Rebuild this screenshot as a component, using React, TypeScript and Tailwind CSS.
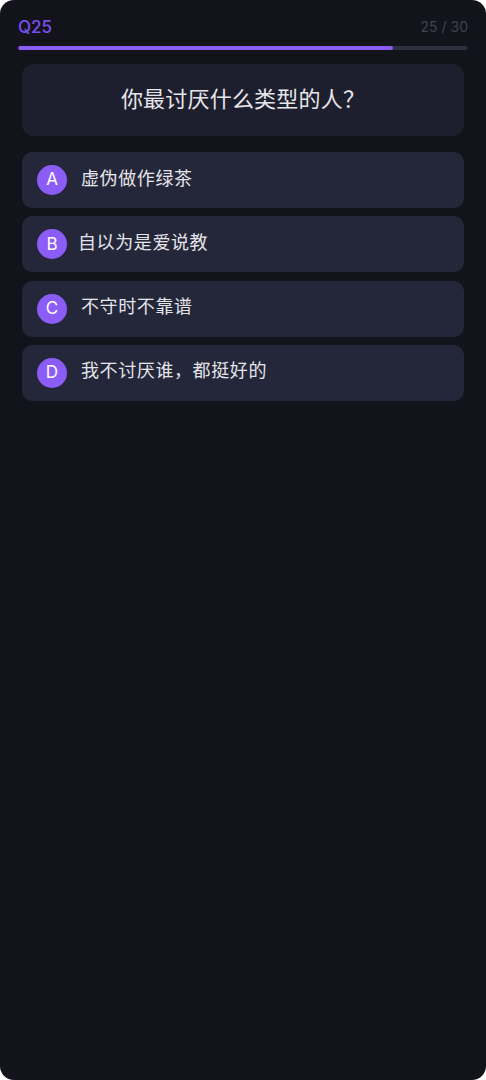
import React from "react";

const options = [
	{ key: "A", text: "虚伪做作绿茶", gap: "ml-[14px]" },
	{ key: "B", text: "自以为是爱说教", gap: "ml-[11px]" },
	{ key: "C", text: "不守时不靠谱", gap: "ml-[14px]" },
	{ key: "D", text: "我不讨厌谁，都挺好的", gap: "ml-[14px]" },
];

export default function App() {
	const current = 25;
	const total = 30;
	const pct = (current / total) * 100;

	return (
		<div className="bg-white w-[486px] h-[1080px]">
			<div
				className="w-full h-full rounded-[14px] bg-[#13131c] px-[18px] pt-[16px]"
				style={{ fontFamily: '"Inter", "Noto Sans CJK SC", sans-serif' }}
			>
				{/* header */}
				<div className="flex items-center justify-between h-[22px]">
					<span className="text-[17px] font-medium text-[#7c4ff0] leading-none">Q{current}</span>
					<span className="text-[14px] text-[#3f4252] leading-none">
						{current} / {total}
					</span>
				</div>

				{/* progress */}
				<div className="mt-[8px] h-[4px] rounded-full bg-[#2c2f3c] overflow-hidden">
					<div className="h-full rounded-full bg-[#8b5cf6]" style={{ width: `${pct}%` }} />
				</div>

				{/* question */}
				<div className="mx-[4px] mt-[14px] h-[72px] rounded-[12px] bg-[#1e1f2e] flex items-center justify-center">
					<h2 className="text-[22px] leading-none pb-[2px] text-[#e6e6ea] tracking-[0.2px]">你最讨厌什么类型的人？</h2>
				</div>

				{/* options */}
				<div className="mx-[4px] mt-[16px] flex flex-col gap-[8.3px]">
					{options.map((o) => (
						<div
							key={o.key}
							className="h-[56px] rounded-[10px] bg-[#242739] flex items-center pl-[15px]"
						>
							<div className="w-[30px] h-[30px] rounded-full bg-[#8b5cf6] flex items-center justify-center text-white text-[17px]">
								{o.key}
							</div>
							<span className={`${o.gap} text-[18px] leading-none pb-[3px] tracking-[0.6px] text-[#e4e4ea]`}>
								{o.text}
							</span>
						</div>
					))}
				</div>
			</div>
		</div>
	);
}
